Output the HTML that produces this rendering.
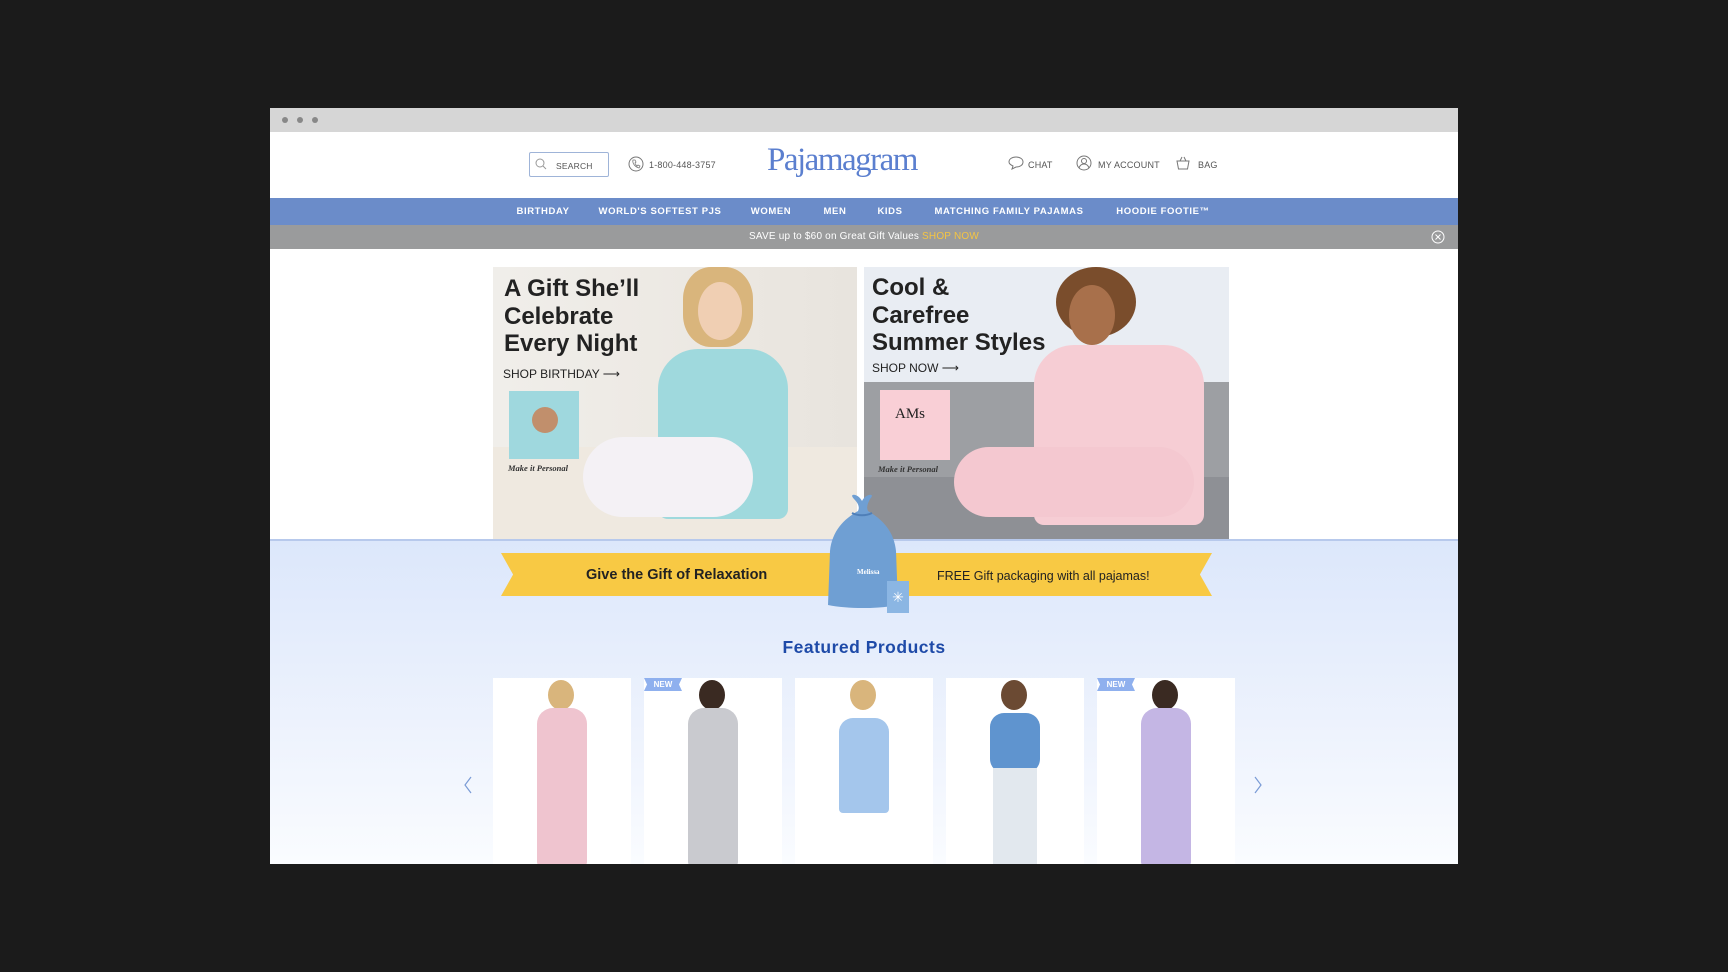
<!DOCTYPE html>
<html><head><meta charset="utf-8"><style>
*{margin:0;padding:0;box-sizing:border-box}
body{width:1728px;height:972px;background:#1b1b1b;position:relative;overflow:hidden;font-family:"Liberation Sans",sans-serif}
.a{position:absolute}
.win{left:270px;top:108px;width:1188px;height:756px;background:#fff;overflow:hidden}
.tb{left:0;top:0;width:1188px;height:24px;background:#d6d6d6}
.dot{width:6px;height:6px;border-radius:50%;background:#888;top:9px}
.hdr{font-size:9px;color:#555;letter-spacing:.2px}
.nav{left:0;top:90px;width:1188px;height:27px;background:#6b8cc9}
.nav span{position:absolute;top:8px;font-size:9.5px;font-weight:bold;color:#fff;letter-spacing:.6px;transform:translateX(-50%);white-space:nowrap}
.promo{left:0;top:117px;width:1188px;height:24px;background:#9a9b9c;color:#fff;font-size:10px;text-align:center;line-height:24px;letter-spacing:.2px}
.h1{font-size:24px;font-weight:bold;color:#222;line-height:27.5px}
.low{left:0;top:431px;width:1188px;height:325px;background:linear-gradient(#dce7fb,#eef3fd 60%,#fafcff);border-top:2px solid #b7c9ec}
.card{top:570px;width:138px;height:200px;background:#fff}
.new{top:570px;height:13px;width:38px;background:#8fb0ee;color:#fff;font-size:8px;font-weight:bold;line-height:13px;text-align:center;clip-path:polygon(0 0,100% 0,92% 50%,100% 100%,0 100%,8% 50%)}
</style></head><body>
<div class="a win">
 <div class="a tb"></div>
 <div class="a dot" style="left:12px"></div><div class="a dot" style="left:27px"></div><div class="a dot" style="left:42px"></div>
 <div class="a" style="left:259px;top:44px;width:80px;height:25px;border:1px solid #9fb4d8;border-radius:2px"></div>
 <svg class="a" style="left:265px;top:50px" width="12" height="12"><circle cx="5" cy="5" r="4" fill="none" stroke="#999" stroke-width="1"/><path d="M8 8l3 3" stroke="#999"/></svg>
 <div class="a hdr" style="left:286px;top:53px;font-size:8.5px">SEARCH</div>
 <svg class="a" style="left:358px;top:48px" width="16" height="16"><circle cx="8" cy="8" r="7" fill="none" stroke="#777"/><path d="M5 4c-1 3 2 7 6 8l1-2-2-1-1 1c-1-1-2-2-2-3l1-1-1-2z" fill="none" stroke="#777" stroke-width=".8"/></svg>
 <div class="a hdr" style="left:379px;top:52px">1-800-448-3757</div>
 <div class="a" style="left:497px;top:34px;font-family:'Liberation Serif',serif;font-size:33px;color:#5b7fcf;letter-spacing:-1.5px">Pajamagram</div>
 <svg class="a" style="left:738px;top:48px" width="16" height="14"><path d="M8 1c4 0 7 2 7 5s-3 5-7 5l-4 2 1-3c-2-1-4-2-4-4 0-3 3-5 7-5z" fill="none" stroke="#777"/></svg>
 <div class="a hdr" style="left:758px;top:52px">CHAT</div>
 <svg class="a" style="left:806px;top:47px" width="16" height="16"><circle cx="8" cy="8" r="7" fill="none" stroke="#777"/><circle cx="8" cy="6" r="2.5" fill="none" stroke="#777"/><path d="M3 13c1-3 3-4 5-4s4 1 5 4" fill="none" stroke="#777"/></svg>
 <div class="a hdr" style="left:828px;top:52px">MY ACCOUNT</div>
 <svg class="a" style="left:905px;top:47px" width="16" height="16"><path d="M2 6h12l-1.5 8h-9z M5 6l2-4 M11 6l-2-4" fill="none" stroke="#777"/></svg>
 <div class="a hdr" style="left:928px;top:52px">BAG</div>
 <div class="a nav">
  <span style="left:273px">BIRTHDAY</span><span style="left:390px">WORLD'S SOFTEST PJS</span><span style="left:501px">WOMEN</span><span style="left:565px">MEN</span><span style="left:620px">KIDS</span><span style="left:739px">MATCHING FAMILY PAJAMAS</span><span style="left:893px">HOODIE FOOTIE™</span>
 </div>
 <div class="a promo">SAVE up to $60 on Great Gift Values <span style="color:#f5c542">SHOP NOW</span></div>
 <svg class="a" style="left:1161px;top:122px" width="14" height="14"><circle cx="7" cy="7" r="6" fill="none" stroke="#fff"/><path d="M4.5 4.5l5 5M9.5 4.5l-5 5" stroke="#fff"/></svg>
 <div class="a" style="left:223px;top:159px;width:364px;height:272px;background:linear-gradient(90deg,#f0eeea,#ece8e2 60%,#e8e4de);overflow:hidden">
  <div class="a" style="left:0;top:180px;width:364px;height:92px;background:#efe9e0"></div>
  <div class="a" style="left:190px;top:0;width:70px;height:80px;border-radius:40%;background:#d9b57c"></div>
  <div class="a" style="left:205px;top:15px;width:44px;height:58px;border-radius:50%;background:#f0cfb3"></div>
  <div class="a" style="left:165px;top:82px;width:130px;height:170px;border-radius:40px 40px 10px 10px;background:#9fd9dd"></div>
  <div class="a" style="left:90px;top:170px;width:170px;height:80px;border-radius:40px;background:#f4f1f5"></div>
  <div class="a" style="left:16px;top:124px;width:70px;height:68px;background:#9fd8de"></div>
  <div class="a" style="left:39px;top:140px;width:26px;height:26px;border-radius:50%;background:#c18f6c"></div>
 </div>
 <div class="a h1" style="left:234px;top:167px">A Gift She’ll<br>Celebrate<br>Every Night</div>
 <div class="a" style="left:233px;top:259px;font-size:12px;color:#222">SHOP BIRTHDAY ⟶</div>
 <div class="a" style="left:238px;top:355px;font-family:'Liberation Serif',serif;font-style:italic;font-weight:bold;font-size:8.5px;color:#333">Make it Personal</div>
 <div class="a" style="left:594px;top:159px;width:365px;height:272px;background:#e9edf3;overflow:hidden">
  <div class="a" style="left:0;top:115px;width:365px;height:157px;background:#9d9fa3"></div>
  <div class="a" style="left:0;top:210px;width:365px;height:62px;background:#8e9095"></div>
  <div class="a" style="left:192px;top:0;width:80px;height:70px;border-radius:50%;background:#7a4d2c"></div>
  <div class="a" style="left:205px;top:18px;width:46px;height:60px;border-radius:50%;background:#a8704b"></div>
  <div class="a" style="left:170px;top:78px;width:170px;height:180px;border-radius:40px 40px 10px 10px;background:#f6cdd4"></div>
  <div class="a" style="left:90px;top:180px;width:240px;height:70px;border-radius:40px;background:#f4c8d0"></div>
  <div class="a" style="left:16px;top:123px;width:70px;height:70px;background:#f9cfd6"></div>
 </div>
 <div class="a h1" style="left:602px;top:166px">Cool &amp;<br>Carefree<br>Summer Styles</div>
 <div class="a" style="left:602px;top:253px;font-size:12px;color:#222">SHOP NOW ⟶</div>
 <div class="a" style="left:625px;top:298px;font-family:'Liberation Serif',serif;font-size:15px;color:#222">AMs</div>
 <div class="a" style="left:608px;top:356px;font-family:'Liberation Serif',serif;font-style:italic;font-weight:bold;font-size:8.5px;color:#333">Make it Personal</div>
 <div class="a low"></div>
 <div class="a" style="left:231px;top:445px;width:711px;height:43px;background:#f8c944;clip-path:polygon(0 0,100% 0,98.3% 50%,100% 100%,0 100%,1.7% 50%)"></div>
 <div class="a" style="left:316px;top:459px;font-size:14.5px;font-weight:bold;color:#222">Give the Gift of Relaxation</div>
 <div class="a" style="left:667px;top:461px;font-size:12.5px;color:#222">FREE Gift packaging with all pajamas!</div>
 <svg class="a" style="left:552px;top:385px" width="80" height="120"><path d="M32 6c-6-6 4-6 8 2 4-8 14-8 8-2-2 4-4 8-2 12 14 8 26 20 28 40l2 54c-20 4-50 4-70 0l2-54c2-20 14-32 28-40 2-4 0-8-4-12z" fill="#6f9fd3"/><path d="M30 20c6 3 14 3 20 0" stroke="#4f7fb8" fill="none" stroke-width="2"/></svg>
 <div class="a" style="left:587px;top:460px;font-family:'Liberation Serif',serif;font-size:7px;color:#fff;font-weight:bold">Melissa</div>
 <div class="a" style="left:617px;top:473px;width:22px;height:32px;background:#8bb6e3;color:#fff;font-size:14px;text-align:center;line-height:32px">✳</div>
 <div class="a" style="left:0;top:529px;width:1188px;text-align:center;font-size:17.5px;font-weight:bold;color:#1e4aa8;letter-spacing:.5px">Featured Products</div>
 <div class="a card" style="left:223px"></div><div class="a card" style="left:374px"></div><div class="a card" style="left:525px"></div><div class="a card" style="left:676px"></div><div class="a card" style="left:827px"></div>
 <div class="a" style="left:278px;top:572px;width:26px;height:30px;border-radius:50%;background:#d9b57c"></div>
 <div class="a" style="left:267px;top:600px;width:50px;height:158px;border-radius:16px 16px 4px 4px;background:#efc4cf"></div>
 <div class="a" style="left:429px;top:572px;width:26px;height:30px;border-radius:50%;background:#3a2a22"></div>
 <div class="a" style="left:418px;top:600px;width:50px;height:158px;border-radius:16px 16px 4px 4px;background:#c9cacf"></div>
 <div class="a" style="left:580px;top:572px;width:26px;height:30px;border-radius:50%;background:#d9b57c"></div>
 <div class="a" style="left:569px;top:610px;width:50px;height:95px;border-radius:14px 14px 4px 4px;background:#a4c6ec"></div>
 <div class="a" style="left:731px;top:572px;width:26px;height:30px;border-radius:50%;background:#6b4a33"></div>
 <div class="a" style="left:720px;top:605px;width:50px;height:60px;border-radius:14px;background:#5f94cf"></div>
 <div class="a" style="left:723px;top:660px;width:44px;height:100px;background:#e2e8ee"></div>
 <div class="a" style="left:882px;top:572px;width:26px;height:30px;border-radius:50%;background:#3a2a22"></div>
 <div class="a" style="left:871px;top:600px;width:50px;height:158px;border-radius:16px 16px 4px 4px;background:#c4b6e4"></div>
 <div class="a new" style="left:374px"> NEW</div><div class="a new" style="left:827px"> NEW</div>
 <svg class="a" style="left:193px;top:668px" width="10" height="18"><path d="M8 1L2 9l6 8" fill="none" stroke="#7a9bd6" stroke-width="1.2"/></svg>
 <svg class="a" style="left:983px;top:668px" width="10" height="18"><path d="M2 1l6 8-6 8" fill="none" stroke="#7a9bd6" stroke-width="1.2"/></svg>
</div>
</body></html>
